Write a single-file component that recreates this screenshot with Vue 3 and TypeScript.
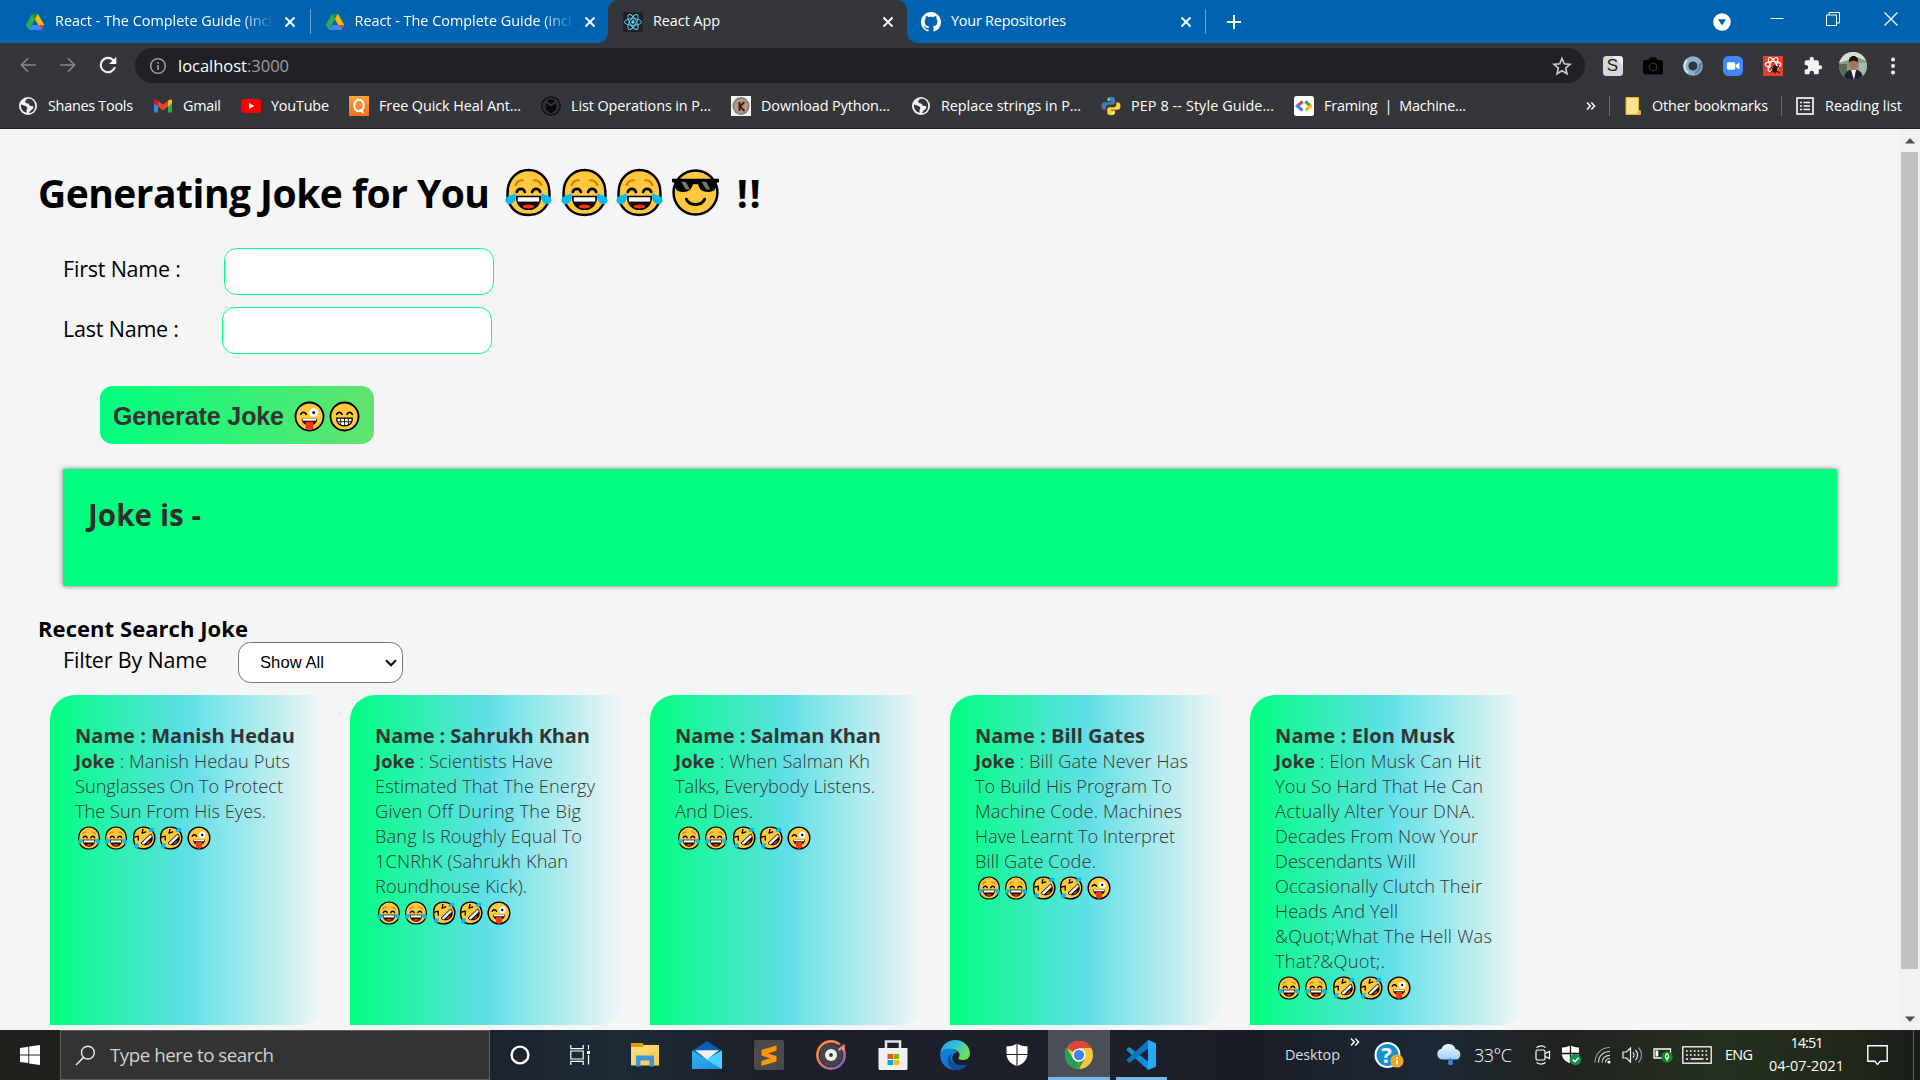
<script setup lang="ts">
import { ref } from 'vue'

interface Bookmark { icon: string; label: string; cell: number; text: number }
interface Tab { icon: string; title: string; text: number; kind: string }
interface JokeCard { name: string; nameWidth: number; lines: [string, number][] }

// Tracks a label out (or in) so that it occupies the given width in pixels.
const vFit = {
  mounted(el: HTMLElement, binding: { value: number }) {
    const count = (el.textContent ?? '').length
    const natural = el.getBoundingClientRect().width
    if (count > 1) el.style.letterSpacing = `${((binding.value - natural) / (count - 1)).toFixed(3)}px`
  },
}

const firstName = ref('')
const lastName = ref('')
const filter = ref('Show All')

const tabs: Tab[] = [
  { icon: 'drive', title: 'React - The Complete Guide (incl', text: 217, kind: 'first' },
  { icon: 'drive', title: 'React - The Complete Guide (incl', text: 217, kind: 'second' },
  { icon: 'react', title: 'React App', text: 67, kind: 'active' },
  { icon: 'github', title: 'Your Repositories', text: 115, kind: 'last' },
]

const bookmarks: Bookmark[] = [
  { icon: 'globe', label: 'Shanes Tools', cell: 135, text: 85 },
  { icon: 'gmail', label: 'Gmail', cell: 88, text: 38 },
  { icon: 'youtube', label: 'YouTube', cell: 108, text: 58 },
  { icon: 'quick', label: 'Free Quick Heal Ant...', cell: 192, text: 142 },
  { icon: 'list-op', label: 'List Operations in P...', cell: 190, text: 140 },
  { icon: 'knife', label: 'Download Python...', cell: 180, text: 129 },
  { icon: 'globe', label: 'Replace strings in P...', cell: 190, text: 140 },
  { icon: 'python', label: 'PEP 8 -- Style Guide...', cell: 193, text: 143 },
  { icon: 'framing', label: 'Framing  |  Machine...', cell: 200, text: 142 },
]

const extensions = ['ext-s', 'ext-cam', 'ext-ring', 'ext-zoom', 'ext-react', 'puzzle']
const apps = ['explorer', 'mail', 'sublime', 'groove', 'store', 'edge', 'defender', 'chrome', 'vscode']
const laughs = ['joy', 'joy', 'rofl', 'rofl', 'zany']

const cards: JokeCard[] = [
  {
    name: 'Name : Manish Hedau', nameWidth: 220,
    lines: [[' : Manish Hedau Puts', 215], ['Sunglasses On To Protect', 208], ['The Sun From His Eyes.', 191]],
  },
  {
    name: 'Name : Sahrukh Khan', nameWidth: 215,
    lines: [[' : Scientists Have', 178], ['Estimated That The Energy', 220], ['Given Off During The Big', 206],
      ['Bang Is Roughly Equal To', 207], ['1CNRhK (Sahrukh Khan', 193], ['Roundhouse Kick).', 152]],
  },
  {
    name: 'Name : Salman Khan', nameWidth: 206,
    lines: [[' : When Salman Kh', 195], ['Talks, Everybody Listens.', 200], ['And Dies.', 78]],
  },
  {
    name: 'Name : Bill Gates', nameWidth: 170,
    lines: [[' : Bill Gate Never Has', 213], ['To Build His Program To', 197], ['Machine Code. Machines', 207],
      ['Have Learnt To Interpret', 200], ['Bill Gate Code.', 121]],
  },
  {
    name: 'Name : Elon Musk', nameWidth: 180,
    lines: [[' : Elon Musk Can Hit', 206], ['You So Hard That He Can', 208], ['Actually Alter Your DNA.', 200],
      ['Decades From Now Your', 203], ['Descendants Will', 141], ['Occasionally Clutch Their', 207],
      ['Heads And Yell', 123], ['&Quot;What The Hell Was', 217], ['That?&Quot;.', 110]],
  },
]
</script>

<template>
  <svg class="sprite" width="0" height="0" aria-hidden="true">
    <defs>
      <linearGradient id="g-edge" x1="0" y1="0" x2="1" y2="0.5"><stop offset="0" stop-color="#1f9be6" /><stop offset="0.5" stop-color="#35c1d5" /><stop offset="1" stop-color="#6fe05a" /></linearGradient>
      <linearGradient id="g-edge2" x1="0" y1="0" x2="0.6" y2="1"><stop offset="0" stop-color="#1287dc" /><stop offset="1" stop-color="#0f6fd0" /></linearGradient>
      <linearGradient id="g-groove" x1="0" y1="0" x2="1" y2="1"><stop offset="0.2" stop-color="#f58a4b" /><stop offset="0.6" stop-color="#d0707e" /><stop offset="1" stop-color="#6a5fd0" /></linearGradient>
      <linearGradient id="g-quick" x1="0" y1="0" x2="0" y2="1"><stop offset="0" stop-color="#f9a43c" /><stop offset="1" stop-color="#f3701c" /></linearGradient>
      <linearGradient id="g-folder" x1="0" y1="0" x2="1" y2="1"><stop offset="0" stop-color="#ffdf80" /><stop offset="1" stop-color="#fbc94a" /></linearGradient>
      <linearGradient id="g-mail" x1="0" y1="0" x2="1" y2="1"><stop offset="0" stop-color="#35b4f0" /><stop offset="1" stop-color="#1b8fe0" /></linearGradient>
      <linearGradient id="g-cloud" x1="0" y1="0" x2="0" y2="1"><stop offset="0" stop-color="#f2f8ff" /><stop offset="1" stop-color="#a3cbf5" /></linearGradient>
      <radialGradient id="g-knife"><stop offset="0" stop-color="#d08050" /><stop offset="0.7" stop-color="#a8a098" /><stop offset="1" stop-color="#6a6a68" /></radialGradient>
    </defs>

    <symbol id="joy" viewBox="0 0 48 48">
      <path d="M24 2C35 2 44.500 10.500 44.500 24c0 3 .5 5-.8 8.500C40 42 33 46 24 46S8 42 4.300 32.500C3 29 3.500 27 3.500 24 3.500 10.500 13 2 24 2z" fill="#ffc83d" stroke="#000" stroke-width="2.400" />
      <path d="M11.500 16.500c1-3 3.500-4.500 7-4.500M36.500 16.500c-1-3-3.500-4.500-7-4.500" fill="none" stroke="#d67d00" stroke-width="2.200" stroke-linecap="round" />
      <path d="M12.500 23.500c1.500-4 6.500-4 8 0M27.500 23.500c1.500-4 6.500-4 8 0" fill="none" stroke="#000" stroke-width="2.600" stroke-linecap="round" />
      <path d="M12.500 28h23c.5 7-4.500 12.500-11.500 12.500S12 35 12.500 28z" fill="#1a0a08" stroke="#000" stroke-width="1.500" />
      <path d="M13.500 28.700h21v4.200h-21z" fill="#fff" />
      <path d="M18 38c2-3 10-3 12 0-3 2.200-9 2.200-12 0z" fill="#f03a17" />
      <path d="M11 24.500c2 6-1.500 11-5.500 11S0 31 3 28.500s6-1.500 8-4zM37 24.500c-2 6 1.500 11 5.500 11S48 31 45 28.500s-6-1.500-8-4z" fill="#00bcf0" />
    </symbol>
    <symbol id="cool" viewBox="0 0 48 48">
      <circle cx="24" cy="24" r="21.500" fill="#ffc83d" stroke="#000" stroke-width="2.400" />
      <path d="M1 10.500h46v3.500l-2.500.5c0 6-2 9-8 9-6.500 0-8.500-2.500-10-7.500h-5c-1.500 5-3.500 7.500-10 7.500-6 0-8-3-8-9L1 14z" fill="#000" />
      <path d="M10 13.500h4.500l4 7.500h-4zM30 13.500h4.500l4 7.500h-4z" fill="#767676" />
      <path d="M15 30.500c3 7 15 7 18 0" fill="none" stroke="#000" stroke-width="2.800" stroke-linecap="round" />
    </symbol>
    <symbol id="zany" viewBox="0 0 48 48">
      <circle cx="24" cy="24" r="21.700" fill="#ffc83d" stroke="#000" stroke-width="2.800" />
      <circle cx="30.500" cy="18" r="6.800" fill="#fff" />
      <circle cx="30.500" cy="18" r="2.300" fill="#000" />
      <path d="M10.500 20.500c1.500-4 7-4 8.500 0" fill="none" stroke="#000" stroke-width="2.800" stroke-linecap="round" />
      <path d="M12 27.500h24c0 6-4.500 10.500-12 10.500S12 33.500 12 27.500z" fill="#1a0a08" />
      <path d="M13.500 27.500h21v3h-21z" fill="#fff" />
      <path d="M18 32h12v9.500c0 5-12 5-12 0z" fill="#f03a17" />
    </symbol>
    <symbol id="grin" viewBox="0 0 48 48">
      <circle cx="24" cy="24" r="21.700" fill="#ffc83d" stroke="#000" stroke-width="2.800" />
      <path d="M12 20.500c1.500-4 6.500-4 8 0M28 20.500c1.500-4 6.500-4 8 0" fill="none" stroke="#000" stroke-width="2.800" stroke-linecap="round" />
      <path d="M12 26.500h24c1 7-4.500 12-12 12s-13-5-12-12z" fill="#fff" stroke="#000" stroke-width="2" />
      <path d="M12.500 32h23M18 27v10M24 27v11M30 27v10" stroke="#000" stroke-width="1.300" />
    </symbol>
    <symbol id="rofl" viewBox="0 0 48 48">
      <path d="M24 2.300c12 0 21.700 9.700 21.700 21.700S36 45.700 24 45.700 8 43 5 35 2.300 12 9 7s10-4.700 15-4.700z" fill="#ffc83d" stroke="#000" stroke-width="2.800" />
      <path d="M20.500 6.500l-1 8 7-3.500M5.500 24l7-3 1 8" fill="none" stroke="#000" stroke-width="2.600" stroke-linejoin="round" stroke-linecap="round" transform="rotate(6 20 20)" />
      <path d="M18 34.500L37.500 16c4.500 6 3.500 14-1 18s-12.500 5.500-18.500.5z" fill="#1a0a08" stroke="#000" stroke-width="2" />
      <path d="M19 34.500L37.300 17.200l2.300 4.300L23.500 36.800z" fill="#fff" />
      <path d="M29 37c1-4 4-7 8-7.500-1 4-4 7-8 7.500z" fill="#f03a17" />
      <path d="M13 34c1 6-1 11-5.500 11S3.500 38 6.500 36s5-.5 6.500-2zM33 11c5 2 11 1 12-3.500S39 2 36.500 4.500 35 9.500 33 11z" fill="#00bcf0" />
    </symbol>

    <symbol id="drive" viewBox="0 0 20 20">
      <path d="M7 2h6l6.300 11h-6z" fill="#ffba00" /><path d="M7 2l3 5.200L4 18l-3.300-5z" fill="#34a853" /><path d="M7 2h5.600L10 7.200z" fill="#1e8e3e" /><path d="M7 13h12.300l-3.200 5H4z" fill="#4285f4" /><path d="M13.300 13h6l-2.400 4z" fill="#ea4335" />
    </symbol>
    <symbol id="react" viewBox="0 0 20 20">
      <rect width="20" height="20" rx="2.500" fill="#202124" />
      <g fill="none" stroke="#61dafb" stroke-width="0.900"><ellipse cx="10" cy="10" rx="8.500" ry="3.300" /><ellipse cx="10" cy="10" rx="8.500" ry="3.300" transform="rotate(60 10 10)" /><ellipse cx="10" cy="10" rx="8.500" ry="3.300" transform="rotate(120 10 10)" /></g>
      <circle cx="10" cy="10" r="1.700" fill="#61dafb" />
    </symbol>
    <symbol id="github" viewBox="0 0 16 16">
      <path fill="#fff" d="M8 0C3.580 0 0 3.580 0 8c0 3.540 2.290 6.530 5.470 7.590.4.07.55-.17.55-.38 0-.19-.01-.82-.01-1.490-2.010.37-2.530-.49-2.690-.94-.09-.23-.48-.94-.82-1.130-.28-.15-.68-.52-.01-.53.63-.01 1.080.58 1.230.82.72 1.210 1.870.87 2.330.66.07-.52.28-.87.51-1.070-1.780-.2-3.640-.89-3.640-3.950 0-.87.31-1.590.82-2.150-.08-.2-.36-1.020.08-2.120 0 0 .67-.21 2.200.82.64-.18 1.320-.27 2-.27s1.360.09 2 .27c1.530-1.040 2.200-.82 2.200-.82.44 1.100.16 1.920.08 2.120.51.56.82 1.270.82 2.150 0 3.070-1.870 3.750-3.650 3.950.29.25.54.73.54 1.480 0 1.070-.01 1.930-.01 2.200 0 .21.15.46.55.38A8.010 8.010 0 0 0 16 8c0-4.420-3.580-8-8-8z" />
    </symbol>
    <symbol id="globe" viewBox="0 0 20 20">
      <circle cx="10" cy="10" r="9" fill="#f1f3f4" />
      <path d="M9 2.800c-1 1.500-2.500 2.500-1.500 4 1.500 1 3.500.3 3.800 2 .2 1.500 2.200 1.200 3.200 1.200 1.200.5 1.500 2-.5 3.500-1.500 1-2 2.500-3.500 3.500 3.500.5 6.700-2.500 6.700-7 0-3.500-2.200-6.500-5.200-7.200zM3 8.500c2 .5 4.500 1.200 6 2.500 1 1.500-.5 2-.5 3.500 0 .8.300 1.500-.2 2.200C5 16 2.300 12.500 3 8.500z" fill="#35363a" />
    </symbol>
    <symbol id="gmail" viewBox="0 0 20 20">
      <path d="M1 5v11.500h4V9z" fill="#4285f4" /><path d="M19 5v11.500h-4V9z" fill="#34a853" /><path d="M15 4.800L17 3.500c1-.6 2 .2 2 1.500v2.500L15 10.500z" fill="#fbbc04" /><path d="M5 4.800L3 3.500C2 2.900 1 3.700 1 5v2.500l4 3z" fill="#c5221f" /><path d="M5 4.800l5 3.900 5-3.900v5.700l-5 3.900-5-3.900z" fill="#ea4335" />
    </symbol>
    <symbol id="youtube" viewBox="0 0 20 20"><rect y="3" width="20" height="14" rx="3.500" fill="#f00" /><path d="M8 7l5.200 3L8 13z" fill="#fff" /></symbol>
    <symbol id="quick" viewBox="0 0 20 20"><rect width="20" height="20" fill="url(#g-quick)" /><ellipse cx="10" cy="9.500" rx="4.700" ry="5.900" fill="none" stroke="#fff" stroke-width="1.900" /><path d="M10.500 13.500l4 3.500" stroke="#fff" stroke-width="2" /></symbol>
    <symbol id="list-op" viewBox="0 0 20 20"><circle cx="10" cy="10" r="9.200" fill="#303134" stroke="#0c0c0d" stroke-width="1.200" /><path d="M4.800 7l5.200 3.500L15.200 7v6.500L10 17.500l-5.200-4z" fill="#08080a" /><path d="M7 3.500h6v2.500l-3 2-3-2z" fill="#08080a" /></symbol>
    <symbol id="knife" viewBox="0 0 20 20"><rect width="20" height="20" fill="#f4f4f2" /><ellipse cx="10" cy="10" rx="8.500" ry="9" fill="url(#g-knife)" /><path d="M8.500 6v9M13.500 6l-4.500 4.500 4.500 4.500" stroke="#43200f" stroke-width="1.900" fill="none" /></symbol>
    <symbol id="python" viewBox="0 0 20 20">
      <path d="M9.900.8C6.800.8 6 2 6 3.500v2h4.200v.8H3.300C1.500 6.300.6 7.800.6 10s.9 3.700 2.400 3.700h1.800v-2.200c0-1.500 1.200-2.700 2.700-2.700h4.200c1.200 0 2.200-1 2.200-2.300v-3c0-1.700-1.500-2.700-4-2.700z" fill="#3f7fb5" />
      <path d="M10.200 19.300c3.100 0 3.900-1.200 3.900-2.700v-2H9.900v-.8h6.900c1.800 0 2.700-1.600 2.700-3.800s-.9-3.600-2.400-3.600h-1.800v2.100c0 1.500-1.200 2.700-2.700 2.700H8.400c-1.200 0-2.200 1-2.200 2.300v3.100c0 1.700 1.500 2.700 4 2.700z" fill="#ffd43b" />
      <circle cx="8" cy="3.300" r=".9" fill="#fff" /><circle cx="12.200" cy="16.800" r=".9" fill="#fff" />
    </symbol>
    <symbol id="framing" viewBox="0 0 20 20"><rect width="20" height="20" rx="2.500" fill="#fff" /><g fill="none" stroke-width="3"><path d="M8.700 5.500L3 10.300" stroke="#ea4335" /><path d="M2.200 9L8.500 14.500" stroke="#4285f4" /><path d="M11.300 5.500l5.700 5" stroke="#34a853" /><path d="M17.800 9L11.500 14.500" stroke="#fbbc04" /></g></symbol>

    <symbol id="ext-s" viewBox="0 0 20 20"><rect width="20" height="20" rx="3.500" fill="#d6d6d6" /><path d="M10 0h6.500A3.500 3.500 0 0 1 20 3.500V10z" fill="#efefef" /></symbol>
    <symbol id="ext-cam" viewBox="0 0 20 20"><path d="M7 1.500h6l1.500 2.500H18c1 0 2 .8 2 2v10.500c0 1-.8 2-2 2H2c-1 0-2-1-2-2V6c0-1.200 1-2 2-2h3.500z" fill="#030303" /><circle cx="10" cy="11" r="3.800" fill="none" stroke="#35363a" stroke-width="1.100" /></symbol>
    <symbol id="ext-ring" viewBox="0 0 20 20"><circle cx="10" cy="10" r="7.200" fill="none" stroke="#8fb0cf" stroke-width="5.200" /><path d="M4 4a8.500 8.500 0 0 0 1 13" fill="none" stroke="#d3e3f1" stroke-width="2" /><path d="M12 17a8 8 0 0 0 5-10" fill="none" stroke="#537fac" stroke-width="2.500" /></symbol>
    <symbol id="ext-zoom" viewBox="0 0 20 20"><rect width="20" height="20" rx="5.500" fill="#4087fc" /><rect x="3.800" y="6.300" width="8.500" height="7.400" rx="1.600" fill="#fff" /><path d="M13 8.800l3.400-2.300v7L13 11.200z" fill="#fff" /></symbol>
    <symbol id="ext-react" viewBox="0 0 20 20"><rect width="20" height="20" fill="#e5402c" /><g fill="none" stroke="#fff" stroke-width="1.100"><ellipse cx="10" cy="8.500" rx="7.800" ry="3" /><ellipse cx="10" cy="8.500" rx="7.800" ry="3" transform="rotate(60 10 8.500)" /><ellipse cx="10" cy="8.500" rx="7.800" ry="3" transform="rotate(120 10 8.500)" /></g><ellipse cx="12" cy="13" rx="2.600" ry="3.600" fill="#241210" /><path d="M7.500 11l9 6M8 16l8-6M12 8.500v9" stroke="#241210" stroke-width="1.100" /></symbol>
    <symbol id="puzzle" viewBox="0 0 24 24"><path fill="#f1f3f4" d="M20.500 11H19V7c0-1.100-.9-2-2-2h-4V3.500a2.500 2.500 0 0 0-5 0V5H4c-1.100 0-2 .9-2 2v3.800h1.500a2.700 2.700 0 0 1 0 5.400H2V20c0 1.100.9 2 2 2h3.800v-1.500a2.700 2.700 0 0 1 5.400 0V22H17c1.100 0 2-.9 2-2v-4h1.500a2.500 2.500 0 0 0 0-5z" /></symbol>

    <symbol id="explorer" viewBox="0 0 30 30"><path d="M1 3h11.500l1.500 2v4H1z" fill="#dd9b08" /><path d="M1 7h11.500l2-2H29v20.500H1z" fill="url(#g-folder)" /><path d="M6 15.500h18V26.500h-4.500v-6h-9v6H6z" fill="#3b97e0" /></symbol>
    <symbol id="mail" viewBox="0 0 30 30"><path d="M0 11L15 1l15 10-15 10z" fill="#0c5fb4" /><path d="M0 10.500l15 9 15-9v18.500H0z" fill="url(#g-mail)" /><path d="M30 10.500V29L14 19.500z" fill="#45d3fc" /><path d="M3 10.300h24L15 19.500z" fill="#efeff1" /></symbol>
    <symbol id="sublime" viewBox="0 0 30 30"><rect width="30" height="30" rx="1.800" fill="#4a4a4a" /><path d="M22.500 5.500v5l-8.500 3 8.500 2.500v5.500l-15 4.500v-5l8.500-2.800-8.500-2.700v-5.500z" fill="#ff9800" /></symbol>
    <symbol id="groove" viewBox="0 0 30 30"><circle cx="15" cy="15" r="11.500" fill="#444648" /><circle cx="15" cy="15" r="13.600" fill="none" stroke="url(#g-groove)" stroke-width="2.600" /><path d="M22 9l4.500-5.500" stroke="#33353a" stroke-width="3" /><path d="M22.500 10l5-3.500v4" fill="none" stroke="#ee8a78" stroke-width="2.600" /><circle cx="15" cy="15" r="6" fill="#f1f1f1" /><circle cx="15" cy="15" r="1.900" fill="#333" /></symbol>
    <symbol id="store" viewBox="0 0 30 30"><path d="M8 9.500V1.500h14v8" fill="none" stroke="#e2e2e2" stroke-width="2.600" /><path d="M.5 8h29v20.500a1.500 1.500 0 0 1-1.500 1.500H2a1.500 1.500 0 0 1-1.500-1.500z" fill="#f1f1f1" /><path d="M9.500 14H15v5H9.500z" fill="#f25022" /><path d="M15.700 14h5.400v5h-5.400z" fill="#7fba00" /><path d="M9.500 20H15v5H9.500z" fill="#00a4ef" /><path d="M15.700 20h5.400v5h-5.400z" fill="#ffb900" /></symbol>
    <symbol id="edge" viewBox="0 0 30 30"><path d="M.3 13.500C1 5 8 0 15 0c8.500 0 15 6 15 13.500 0 4.500-3.500 6.500-7 6.500-3 0-5-1-4.500-2.300 1-1.500 1.500-3.200.5-5C16.500 8.500 5 7 .3 13.500z" fill="url(#g-edge)" /><path d="M.2 14C2 9.500 7 8 11.500 9c3 .6 5 1.800 6 3.500-3-.5-6 2.500-5 7 1.500 5 6 7.500 14.500 5.500C24 28.300 20 30 15.500 30 6.500 30-.5 23 .2 14z" fill="url(#g-edge2)" /><path d="M12.500 12.500c-2.500 2-3 6 0 9.500 3 3 8 4 14.500 2.500-2.500 4-7 5.500-11.500 5.500-8-1.500-11-12-3-17.500z" fill="#0d4fa3" /></symbol>
    <symbol id="defender" viewBox="0 0 30 30"><path d="M15 3.500c3 2 6.500 2.800 10.500 2.800V14c0 6-4.500 9.800-10.500 12.300C9 23.800 4.500 20 4.500 14V6.300C8.500 6.300 12 5.500 15 3.500z" fill="#fff" /><path d="M15 3v24M4 14.500h22" stroke="#1c2028" stroke-width="1.100" /></symbol>
    <symbol id="chrome" viewBox="0 0 30 30"><circle cx="15" cy="15" r="14" fill="#f8c63c" /><path d="M15 15L2.900 8A14 14 0 0 1 27.100 8H15z" fill="#e0453a" /><path d="M15 1a14 14 0 0 1 12.100 7H15a7 7 0 0 0-6.100 3.500L2.900 8A14 14 0 0 1 15 1z" fill="#e0453a" /><path d="M2.900 8l6 10.500A7 7 0 0 0 15 22l-2 7A14 14 0 0 1 2.900 8z" fill="#1ea05a" /><path d="M21 18.500L15 29h-2l2.500-7z" fill="#1ea05a" /><circle cx="15" cy="15" r="6.600" fill="#fff" /><circle cx="15" cy="15" r="5.200" fill="#3f84f3" /></symbol>
    <symbol id="vscode" viewBox="0 0 30 30"><path d="M3.300 7L22 21.500v8.500L.8 10.500v-1.700z" fill="#1090dc" /><path d="M22 0v8.800L3.300 23 .8 21v-1.500z" fill="#0a75bd" /><path d="M22 0l8 3.300v23.400L22 30z" fill="#27a9f5" /></symbol>
  </svg>

  <div class="desktop">
    <header class="tabstrip">
      <div v-for="(tab, i) in tabs" :key="i" class="tab" :class="tab.kind">
        <svg class="favicon"><use :href="'#' + tab.icon" /></svg>
        <span class="title"><span v-fit="tab.text">{{ tab.title }}</span></span>
        <svg class="close" viewBox="0 0 12 12"><path d="M1.500 1.500l9 9M10.500 1.500l-9 9" stroke="#fff" stroke-width="1.900" /></svg>
      </div>
      <svg class="plus" viewBox="0 0 16 16"><path d="M8 1v14M1 8h14" stroke="#fff" stroke-width="2" /></svg>
      <svg class="tab-search" viewBox="0 0 18 18"><circle cx="9" cy="9" r="8.800" fill="#fff" /><path d="M5 6.300h8L9 12.500z" fill="#0063b1" /></svg>
      <svg class="win-btn min" viewBox="0 0 14 14"><path d="M.5 6.500h13" stroke="#fff" /></svg>
      <svg class="win-btn max" viewBox="0 0 14 14"><path d="M.5 3h10v10.500H.5zM3 3V.5h10.500v10.500h-3" fill="none" stroke="#fff" /></svg>
      <svg class="win-btn quit" viewBox="0 0 14 14"><path d="M.5.500l13 13M13.500.500l-13 13" stroke="#fff" stroke-width="1.200" /></svg>
    </header>

    <div class="toolbar">
      <svg class="nav" viewBox="0 0 24 24"><path fill="#87888b" d="M21.500 11.100H6.200l6.600-6.600L11.500 3.200 2.700 12l8.800 8.800 1.300-1.300-6.600-6.600h15.300z" /></svg>
      <svg class="nav forward" viewBox="0 0 24 24"><path fill="#87888b" d="M2.500 11.100h15.300l-6.600-6.600 1.300-1.300 8.800 8.800-8.800 8.800-1.300-1.300 6.600-6.600H2.500z" /></svg>
      <svg class="nav reload" viewBox="0 0 24 24"><path fill="#f1f3f4" d="M19 5A9.900 9.900 0 1 0 21.600 14.500h-2.600A7.400 7.400 0 1 1 17.200 6.800L13.300 10.700H22V2z" /></svg>
      <div class="omnibox">
        <svg class="info" viewBox="0 0 18 18"><circle cx="9" cy="9" r="7.300" fill="none" stroke="#9aa0a6" stroke-width="1.500" /><path d="M9 8v5M9 5v1.700" stroke="#9aa0a6" stroke-width="1.700" /></svg>
        <span v-fit="111" class="url">localhost<i>:3000</i></span>
        <svg class="star" viewBox="0 0 24 24"><path fill="none" stroke="#c9cbce" stroke-width="2" d="M12 3l2.700 6.400 6.900.6-5.200 4.500 1.600 6.800L12 17.700l-6 3.600 1.600-6.800L2.400 10l6.900-.6z" /></svg>
      </div>
      <div class="extensions">
        <div v-for="e in extensions" :key="e" class="ext">
          <svg :class="e"><use :href="'#' + e" /></svg>
          <b v-if="e === 'ext-s'">S</b>
        </div>
      </div>
      <svg class="avatar" viewBox="0 0 28 28">
        <clipPath id="avatar-clip"><circle cx="14" cy="14" r="14" /></clipPath>
        <g clip-path="url(#avatar-clip)">
          <rect width="28" height="28" fill="#8e9a88" /><path d="M0 0h28v9L18 5 0 11z" fill="#d9ded4" /><path d="M0 12h8v16H0z" fill="#5d6b58" /><path d="M20 11h8v17h-8z" fill="#a9b5ae" />
          <path d="M5 28c0-7 3-9 6-10h7c4 1 6 4 6 10z" fill="#1c2130" /><path d="M12 18h5l-2 10z" fill="#f2f2f2" /><ellipse cx="14.500" cy="12.500" rx="3.900" ry="5.600" fill="#a7765a" /><path d="M10 11c-.5-5 1.500-7 4.500-7s5 2 4.500 7c-1-3-8-3-9 0z" fill="#181412" />
        </g>
      </svg>
      <svg class="kebab" viewBox="0 0 6 18"><g fill="#f1f3f4"><circle cx="3" cy="2.500" r="2" /><circle cx="3" cy="9" r="2" /><circle cx="3" cy="15.500" r="2" /></g></svg>
    </div>

    <nav class="bookmarks">
      <div v-for="b in bookmarks" :key="b.label" class="bookmark" :style="{ width: b.cell + 'px' }">
        <svg><use :href="'#' + b.icon" /></svg><span v-fit="b.text">{{ b.label }}</span>
      </div>
      <svg class="more" viewBox="0 0 10 10"><path d="M1 1.500L4.300 5 1 8.500M5.300 1.500L8.600 5 5.300 8.500" fill="none" stroke="#fff" stroke-width="1.500" /></svg>
      <i class="divider" />
      <svg class="folder" viewBox="0 0 16 20"><path d="M1 1.500h12.500V14l2 1v3.500H1z" fill="#ffe18f" stroke="#e5b93c" stroke-width="1" /><path d="M13 14.500h2.500v4H12z" fill="#e9bd3c" /></svg>
      <div class="other"><span v-fit="116">Other bookmarks</span></div>
      <i class="divider second" />
      <svg class="reading" viewBox="0 0 18 18"><rect x="1" y="1" width="16" height="16" fill="none" stroke="#f1f3f4" stroke-width="1.700" /><path d="M4 5.500h2M4 9h2M4 12.500h2M7.500 5.500H14M7.500 9H14M7.500 12.500H14" stroke="#f1f3f4" stroke-width="1.600" /></svg>
      <span v-fit="77">Reading list</span>
    </nav>

    <div class="viewport">
      <main class="page">
        <h1>
          <div class="lead"><span v-fit="452">Generating Joke for You</span></div>
          <div class="big-emojis"><svg v-for="(e, i) in ['joy', 'joy', 'joy', 'cool']" :key="i"><use :href="'#' + e" /></svg></div>
          <span v-fit="24">!!</span>
        </h1>
        <div class="field">
          <label class="caption"><span v-fit="118">First Name :</span></label>
          <input v-model="firstName" type="text">
        </div>
        <div class="field last">
          <label class="caption"><span v-fit="116">Last Name :</span></label>
          <input v-model="lastName" type="text">
        </div>
        <button class="generate" type="button">
          <div class="label"><span v-fit="171">Generate Joke</span></div>
          <svg><use href="#zany" /></svg><svg><use href="#grin" /></svg>
        </button>
        <section class="result"><span v-fit="113">Joke is -</span></section>
        <h3><span v-fit="210">Recent Search Joke</span></h3>
        <div class="filter">
          <label><span v-fit="144">Filter By Name</span></label>
          <div class="select">
            <span v-fit="64">{{ filter }}</span>
            <svg viewBox="0 0 12 8"><path d="M1 1.200l5 5 5-5" fill="none" stroke="#111" stroke-width="2.200" /></svg>
          </div>
        </div>
        <div class="cards">
          <article v-for="c in cards" :key="c.name">
            <h4><span v-fit="c.nameWidth">{{ c.name }}</span></h4>
            <p v-for="(line, i) in c.lines" :key="i"><span v-fit="line[1]"><b v-if="i === 0">Joke</b>{{ line[0] }}</span></p>
            <div class="laughs"><svg v-for="(e, i) in laughs" :key="i"><use :href="'#' + e" /></svg></div>
          </article>
        </div>
      </main>
      <div class="scrollbar">
        <svg viewBox="0 0 10 6"><path d="M0 5.500L5 0l5 5.500z" fill="#505050" /></svg>
        <div class="thumb" />
        <svg viewBox="0 0 10 6"><path d="M0 .5h10L5 6z" fill="#505050" /></svg>
      </div>
    </div>

    <footer class="taskbar">
      <div class="start"><svg viewBox="0 0 20 20"><path d="M0 2.900L8.300 1.800V9.500H0zM9.200 1.600L20 0v9.500H9.200zM0 10.400h8.300v7.700L0 17zM9.200 10.400H20V20L9.200 18.400z" fill="#fff" /></svg></div>
      <div class="search">
        <svg viewBox="0 0 22 22"><circle cx="13.500" cy="8" r="6.700" fill="none" stroke="#e8e8e8" stroke-width="1.500" /><path d="M9 13L1 21" stroke="#e8e8e8" stroke-width="1.600" /></svg>
        <span v-fit="164">Type here to search</span>
      </div>
      <div class="cell narrow"><svg class="cortana" viewBox="0 0 20 20"><circle cx="10" cy="10" r="8.400" fill="none" stroke="#fff" stroke-width="2.400" /></svg></div>
      <div class="cell narrow view"><svg class="cortana" viewBox="0 0 20 20"><path d="M.8 0v3.700h12.400V0M.8 20v-3.700h12.400V20M.8 6h12.400v8H.8zM18.500 0v4.500M18.500 10v9.500" fill="none" stroke="#fff" stroke-width="1.200" /><rect x="17" y="6" width="3" height="3" fill="#fff" /></svg></div>
      <div v-for="a in apps" :key="a" class="cell" :class="a"><svg><use :href="'#' + a" /></svg></div>

      <div class="tray">
        <div class="t-desktop"><span v-fit="55">Desktop</span></div>
        <svg class="t-more" viewBox="0 0 10 8"><path d="M1 .5L4.300 4 1 7.500M5.300.500L8.600 4 5.300 7.500" fill="none" stroke="#fff" stroke-width="1.400" /></svg>
        <div class="t-help">
          <svg viewBox="0 0 30 28"><circle cx="13.500" cy="14" r="13" fill="#fff" /><circle cx="13.500" cy="14" r="11" fill="#1790d3" /><circle cx="23" cy="20" r="6.600" fill="#f2a51d" /><path d="M23 19v4.500M23 16v1.700" stroke="#fff" stroke-width="1.700" /></svg>
          <b>?</b>
        </div>
        <svg class="t-weather" viewBox="0 0 27 22"><path d="M6 15.500a5.500 5.500 0 0 1-.5-10.800A7.500 7.500 0 0 1 19.500 5a5.500 5.500 0 0 1 1.500 10.500z" fill="url(#g-cloud)" /><path d="M14.500 13.500c1.800 2.700 2.500 3.700 2.500 5.200a2.500 2.500 0 0 1-5 0c0-1.500.7-2.500 2.500-5.200z" fill="#2f86e4" /></svg>
        <div class="t-temp"><span v-fit="38">33°C</span></div>
        <svg class="t-cam" viewBox="0 0 18 20"><g fill="none" stroke="#fff" stroke-width="1.200"><rect x="2" y="5" width="9" height="10" rx="1.500" /><path d="M11 8.500l4.500-2v7l-4.500-2M2.500 2.500c3-2 6.500-2 9 0M2.500 17.500c3 2 6.500 2 9 0" /></g></svg>
        <svg class="t-shield" viewBox="0 0 21 22"><path d="M9.500.5c2.500 2 5 2.500 9 2.500v7c0 5-4 8-9 10-5-2-9-5-9-10V3c4 0 6.500-.5 9-2.500z" fill="#fff" stroke="#000" stroke-width=".8" /><path d="M9.500.5v20M.5 9.500h18" stroke="#111" stroke-width="1.300" /><circle cx="14.500" cy="15.500" r="5.800" fill="#1a8a4a" /><path d="M11.700 15.500l2.200 2.200 3.700-4" fill="none" stroke="#fff" stroke-width="1.400" /></svg>
        <svg class="t-wifi" viewBox="0 0 17 18"><g fill="none" stroke="#d8d8d8" stroke-width="1.200"><path d="M1 16.500C1 8 7 1.500 16 1.500" stroke="#9a9a9a" /><path d="M4.500 16.500C4.500 10 9 5.500 16 5.500M8 16.500c0-4 3-7.200 8-7.200M11.500 16.500c0-2.500 1.500-4 4.500-4" /></g><circle cx="15" cy="16" r="1.600" fill="#fff" /></svg>
        <svg class="t-volume" viewBox="0 0 21 18"><g fill="none" stroke="#f0f0f0" stroke-width="1.200"><path d="M1 6h3.500L8.500 2v14l-4-4H1zM11 6.500c1.300 1.300 1.300 3.700 0 5M13.500 4c2.700 2.700 2.700 7.300 0 10" /><path d="M16.500 1.500c4 4 4 11 0 15" stroke="#8e8e8e" /></g></svg>
        <svg class="t-battery" viewBox="0 0 20 16"><path d="M1 2h16.500v9H1z" fill="none" stroke="#fff" stroke-width="1.300" /><path d="M2.500 3.500h2.800v6H2.500z" fill="#fff" /><circle cx="14" cy="10" r="5.800" fill="#118a1b" /><path d="M14 6.300c2 2 2.500 4.500 0 6-2.500-1.500-2-4 0-6zM14 10v4" fill="none" stroke="#fff" stroke-width="1.100" /></svg>
        <svg class="t-keyboard" viewBox="0 0 30 18"><rect x=".8" y=".8" width="28.400" height="16.400" fill="none" stroke="#fff" stroke-width="1.300" /><path d="M4 5h22M4 9h22" stroke="#fff" stroke-width="1.600" stroke-dasharray="1.700 2.200" /><path d="M4 13h2M8.500 13h13M24 13h2" stroke="#fff" stroke-width="1.400" /></svg>
        <div class="t-lang"><span v-fit="28">ENG</span></div>
        <div class="t-clock"><span v-fit="33">14:51</span><span v-fit="75">04-07-2021</span></div>
        <svg class="t-notify" viewBox="0 0 21 21"><path d="M.8.800h19.400v15.500h-7L10.500 19.500 7.800 16.300h-7z" fill="none" stroke="#fff" stroke-width="1.400" /></svg>
        <i class="t-edge" />
      </div>
    </footer>
  </div>
</template>

<style>
body { margin: 0; overflow: hidden; }
</style>

<style scoped>
.sprite { position: absolute; }
.desktop {
  width: 1920px; height: 1080px; overflow: hidden;
  display: flex; flex-direction: column;
  font-family: "Open Sans", "Noto Sans", sans-serif;
  background: #f5f5f5;
}
svg { display: block; flex: none; }
span { white-space: pre; }
i { font-style: normal; }

/* tab strip */
.tabstrip { height: 43px; flex: none; display: flex; align-items: center; background: #0063b1; color: #fff; font-size: 14.400px; }
.tab { height: 43px; box-sizing: border-box; display: flex; align-items: center; position: relative; }
.tab.first { width: 310px; padding-left: 25px; }
.tab.second { width: 298px; padding-left: 14.500px; }
.tab.active { width: 299px; padding-left: 15px; background: #35363a; border-radius: 10px 10px 0 0; }
.tab.last { width: 300px; padding-left: 14px; }
.tab.first::after, .tab.last::after { content: ""; position: absolute; right: -1px; top: 9px; width: 1px; height: 25px; background: #6fa6d3; }
.tab.last::after { right: 1px; }
.tab.active::before, .tab.active::after { content: ""; position: absolute; bottom: 0; width: 10px; height: 10px; }
.tab.active::before { left: -10px; background: radial-gradient(circle at 0 0, transparent 9.500px, #35363a 10px); }
.tab.active::after { right: -10px; background: radial-gradient(circle at 100% 0, transparent 9.500px, #35363a 10px); }
.favicon { width: 20px; height: 20px; }
.title { width: 217px; margin-left: 10px; overflow: hidden; line-height: 43px; margin-top: -2px; }
.title span { display: inline-block; }
.first .title, .second .title { -webkit-mask-image: linear-gradient(90deg, #000 187px, transparent 219px); mask-image: linear-gradient(90deg, #000 187px, transparent 219px); }
.close { width: 12px; height: 12px; margin-left: 12px; }
.plus { width: 16px; height: 16px; margin-left: 18.500px; }
.tab-search { width: 18px; height: 18px; margin-left: 471.500px; }
.win-btn { width: 14px; height: 14px; margin-top: -6px; }
.min { margin-left: 39px; }
.max { margin-left: 42px; }
.quit { margin-left: 44px; }

/* toolbar */
.toolbar { height: 45px; flex: none; display: flex; align-items: center; background: #35363a; }
.nav { width: 20px; height: 20px; margin-left: 18px; margin-top: -1px; }
.forward { margin-left: 20px; }
.reload { width: 20px; height: 20px; margin-left: 19.500px; }
.omnibox { width: 1450px; height: 35px; margin-left: 17.500px; border-radius: 18px; background: #202124; display: flex; align-items: center; }
.info { width: 18px; height: 18px; margin-left: 14px; }
.url { margin-left: 11px; color: #fff; font-size: 16.500px; line-height: 33px; margin-top: -1px; }
.url i { color: #9aa0a6; }
.star { width: 20px; height: 20px; margin-left: auto; margin-right: 13px; }
.extensions { display: flex; margin-left: 7.500px; }
.ext { width: 40px; height: 24px; display: flex; align-items: center; justify-content: center; position: relative; }
.ext svg { width: 20px; height: 20px; }
.ext b { position: absolute; inset: 0; text-align: center; font: 400 17px/24px "Liberation Sans", sans-serif; color: #222; }
.avatar { width: 28px; height: 28px; margin-left: 6.500px; }
.kebab { width: 6px; height: 18px; margin-left: 22.500px; }

/* bookmarks bar */
.bookmarks { height: 41px; flex: none; box-sizing: border-box; display: flex; align-items: center; padding-left: 18px; padding-bottom: 4px; background: #35363a; border-bottom: 1px solid #1f2023; color: #fff; font-size: 14.400px; line-height: 34px; }
.bookmark { display: flex; align-items: center; flex: none; }
.bookmark svg { width: 20px; height: 20px; margin-right: 10px; }
.more { width: 10px; height: 10px; margin-left: 92px; }
.divider { width: 1px; height: 20px; margin-left: 13px; background: #6b6c6f; }
.folder { width: 16px; height: 20px; margin-left: 15px; }
.other { margin-left: 11px; width: 116px; }
.divider.second { margin-left: 13px; }
.reading { width: 18px; height: 18px; margin-left: 14px; margin-right: 11px; }

/* page */
.viewport { height: 901px; flex: none; display: flex; background: #f5f5f5; }
.page { width: 1899px; box-sizing: border-box; padding: 38px 0 0 38px; color: #000; }
h1, h3, h4, p { margin: 0; }
h1 { height: 51px; display: flex; align-items: center; font-size: 39px; line-height: 51px; font-weight: 700; }
.lead { width: 452px; }
.big-emojis { display: flex; margin: 0 10px 0 14px; }
.big-emojis svg { width: 49px; height: 49px; margin-right: 6.700px; }
.field { display: flex; height: 47px; margin: 30px 0 0 25px; font-size: 21.500px; font-weight: 370; }
.field.last { margin-top: 12px; }
.caption { width: 161px; line-height: 41px; }
.last .caption { width: 159px; line-height: 43px; }
.field input { width: 270px; height: 47px; box-sizing: border-box; margin: 0; padding: 0 12px; border: 1px solid #00ff7f; border-radius: 12.500px; background: #fff; outline: none; }
.generate { display: flex; align-items: center; width: 274px; height: 58px; margin: 32px 0 0 62px; padding: 2px 0 0 13px; border: 0; border-radius: 12.500px; background: linear-gradient(90deg, #00ff7f, #62e36f); color: #333; font: 700 25px "Liberation Sans", sans-serif; }
.label { width: 172px; margin-right: 9px; text-align: left; }
.generate svg { width: 31px; height: 31px; margin-right: 3.500px; }
.result { width: 1774px; height: 117px; margin: 25px 0 0 25px; box-sizing: border-box; padding-left: 25px; background: #00ff7f; box-shadow: 0 0 5px #777; color: #2d2d2d; font-size: 29.500px; font-weight: 700; line-height: 92px; }
h3 { height: 29px; margin-top: 27px; font-size: 22px; line-height: 31px; font-weight: 700; }
.filter { display: flex; height: 41px; margin-left: 25px; font-size: 21.500px; line-height: 36px; font-weight: 370; }
.filter label { width: 175px; }
.select { display: flex; align-items: center; width: 165px; height: 41px; box-sizing: border-box; padding: 0 5px 0 21px; border: 1px solid #767676; border-radius: 12.500px; background: #fff; font: 400 16.600px "Liberation Sans", sans-serif; justify-content: space-between; }
.select svg { width: 12px; height: 8px; }
.cards { display: flex; gap: 25px; margin: 12px 0 0 12px; }
.cards article { width: 275px; height: 330px; box-sizing: border-box; padding: 28px 0 0 25px; border-radius: 25px 0 25px 0; background: linear-gradient(90deg, #00ff7f, #5fe0e6 50%, #f5f5f5); color: #333; font-size: 18.200px; line-height: 25px; }
h4 { font-size: 20px; line-height: 26px; }
p { height: 25px; font-weight: 345; }
p b { font-weight: 700; }
.laughs { display: flex; margin: 2px 0 0 1.500px; }
.laughs svg { width: 24px; height: 24px; margin-right: 3.550px; }
.scrollbar { width: 21px; box-sizing: border-box; padding: 9px 0 7px; display: flex; flex-direction: column; align-items: center; background: #f1f1f1; }
.scrollbar svg { width: 10px; height: 6px; }
.thumb { width: 17px; height: 817px; margin: 8px 0 47px; background: #c1c1c1; }

/* taskbar */
.taskbar { height: 50px; flex: none; display: flex; background: linear-gradient(90deg, #20211c 0, #20211c 60px, #1b242f 500px, #1d2b36 620px, #1c1f29 760px, #1c202a 1100px, #191d26 1250px, #1c2836 1430px, #20231f 1560px, #24301f 1720px, #202719 1860px, #191c18 1920px); color: #fff; }
.start { width: 60px; display: flex; align-items: center; justify-content: center; }
.start svg { width: 20px; height: 20px; }
.search { width: 430px; box-sizing: border-box; border: 1px solid #5f5f5f; background: #333; display: flex; align-items: center; padding-left: 14px; color: #d0d0d0; font-size: 18.800px; line-height: 46px; }
.search svg { width: 21px; height: 21px; margin-right: 14px; }
.search span { margin-top: -1px; }
.cell { width: 62px; display: flex; align-items: center; justify-content: center; position: relative; }
.cell svg { width: 30px; height: 30px; }
.cell.narrow { width: 60px; }
.cell.view { margin-right: 3.500px; }
.cell .cortana { width: 20px; height: 20px; }
.cell.chrome { background: #4a4e57; }
.cell.chrome::after, .cell.vscode::after { content: ""; position: absolute; left: 0; right: 0; bottom: 0; height: 3px; background: #76b9ed; }
.cell.vscode::after { left: 6px; right: 5px; }
.tray { display: flex; align-items: center; line-height: 46px; flex: none; }
.t-desktop { width: 55px; margin-left: 113.500px; font-size: 14.400px; color: #ddd; }
.t-more { width: 10px; height: 8px; margin: -26px 0 0 9.500px; }
.t-help { width: 30px; height: 28px; margin-left: 14px; position: relative; }
.t-help svg { width: 30px; height: 28px; }
.t-help b { position: absolute; left: 0; top: 0; width: 26px; text-align: center; font-size: 22px; line-height: 27px; }
.t-weather { width: 27px; height: 22px; margin-left: 32px; }
.t-temp { width: 37px; margin-left: 11.500px; font-size: 18px; font-weight: 350; }
.t-cam { width: 18px; height: 20px; margin-left: 22.500px; }
.t-shield { width: 21px; height: 22px; margin-left: 9px; }
.t-wifi { width: 17px; height: 18px; margin-left: 12px; }
.t-volume { width: 21px; height: 18px; margin-left: 11px; }
.t-battery { width: 20px; height: 16px; margin-left: 10px; }
.t-keyboard { width: 30px; height: 18px; margin-left: 9px; }
.t-lang { width: 28px; margin-left: 13.500px; font-size: 14.400px; }
.t-clock { width: 75px; margin-left: 16px; display: flex; flex-direction: column; align-items: center; font-size: 14.400px; line-height: 23px; margin-top: -2px; }
.t-notify { width: 21px; height: 21px; margin-left: 23px; }
.t-edge { width: 1px; height: 50px; margin-left: 25px; background: #5a5d58; }
</style>
